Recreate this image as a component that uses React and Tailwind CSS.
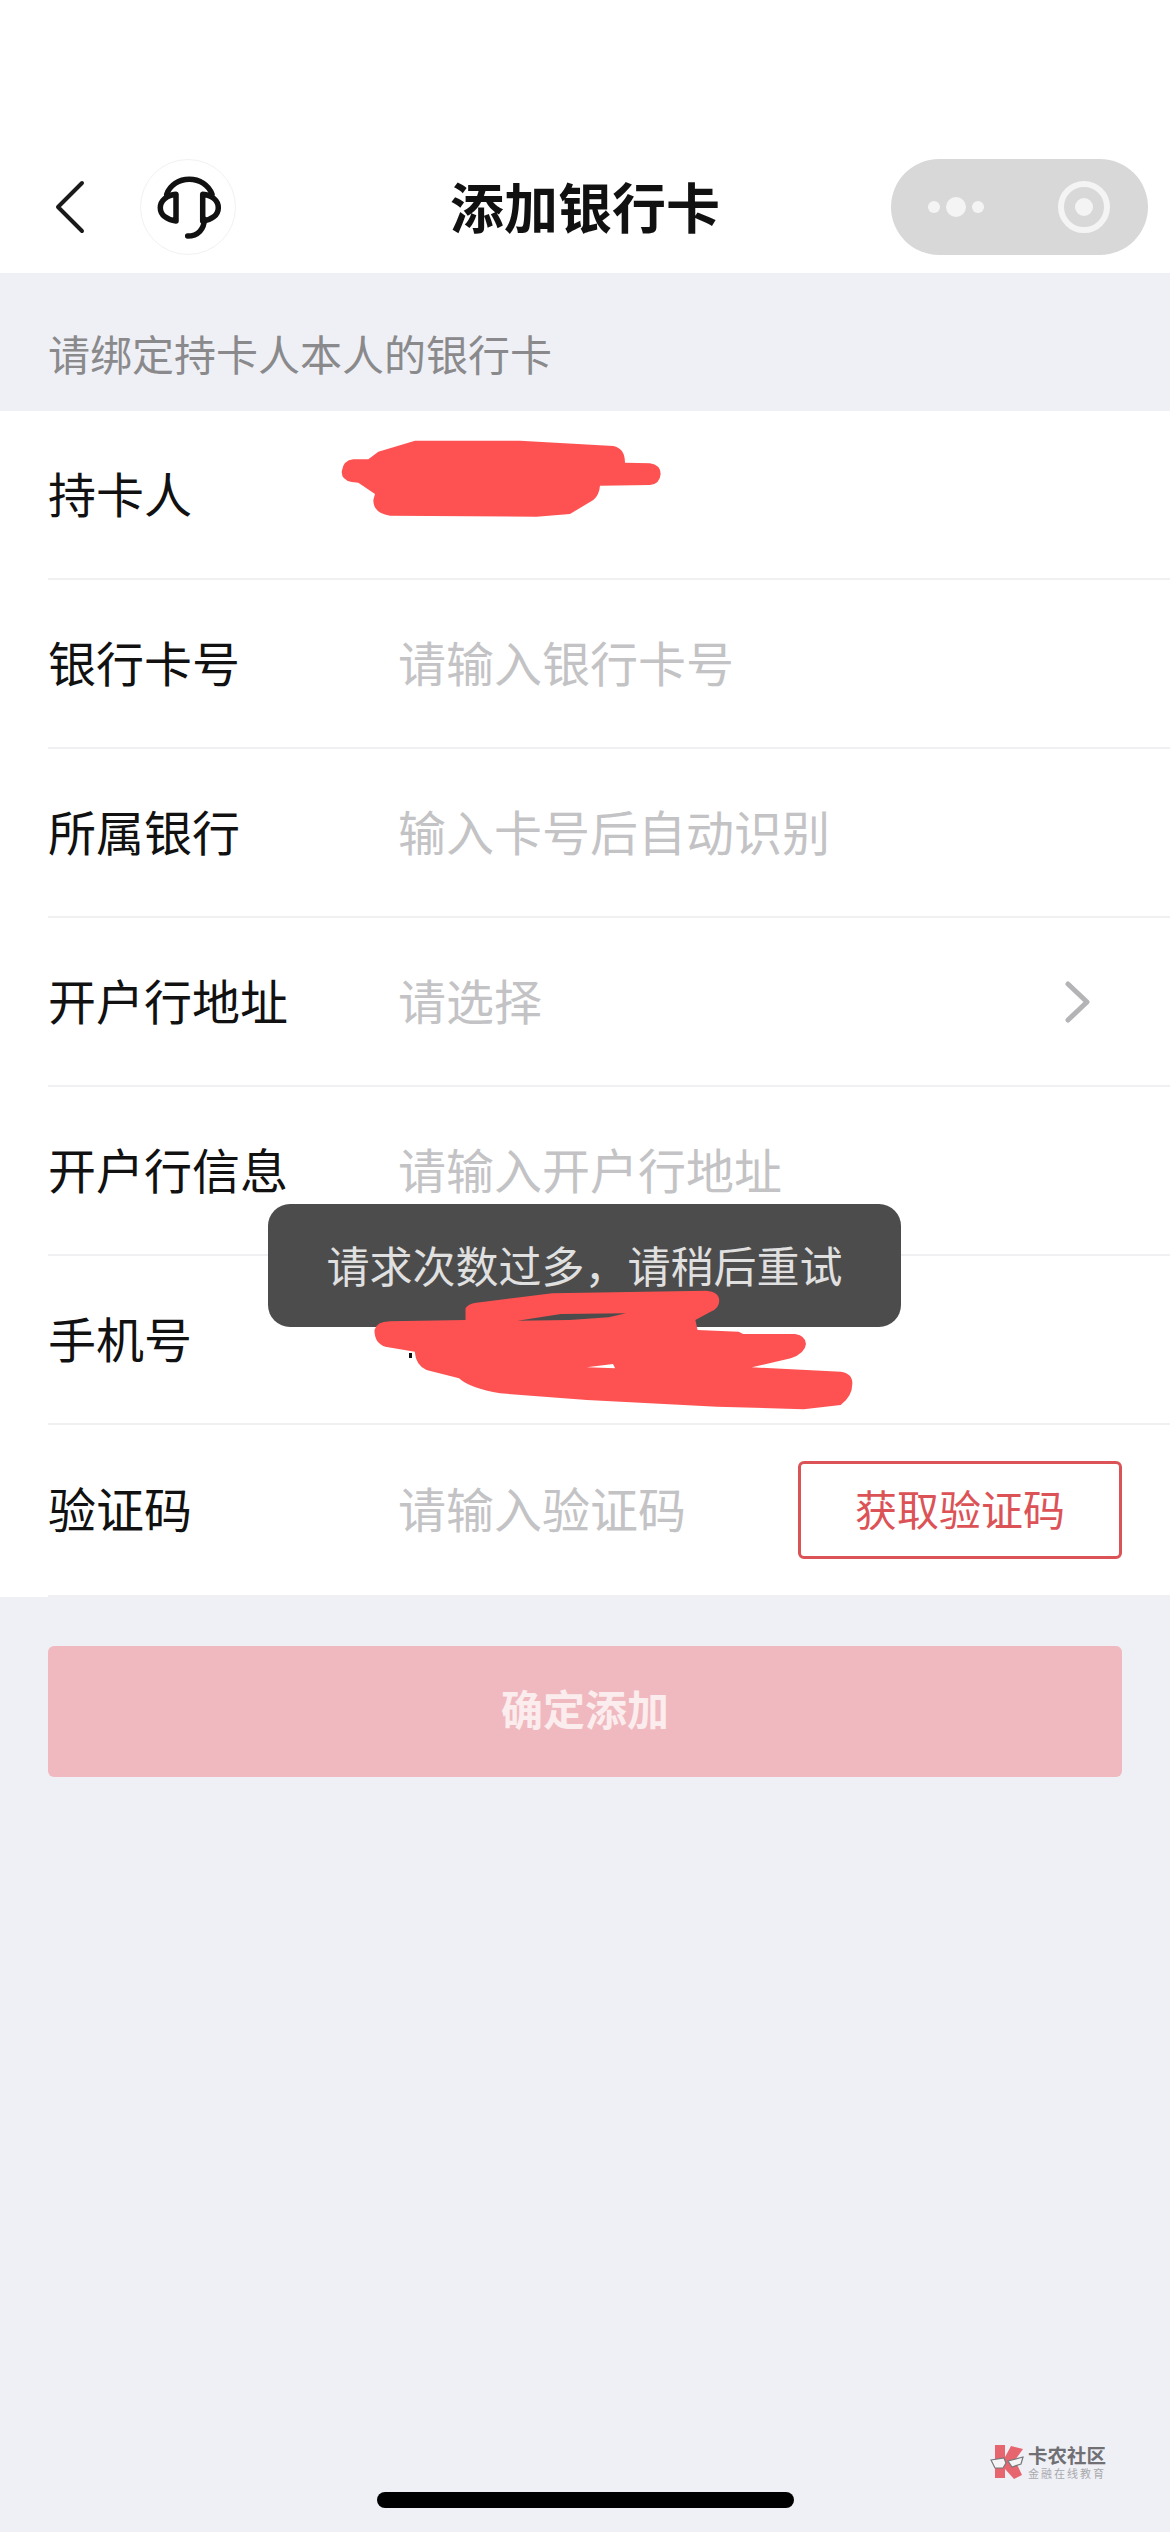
const font = { fontFamily: '"Noto Sans CJK SC", "Noto Sans", sans-serif' };

const Row = ({ label, placeholder, right, className = "h-[169px]" }) => (
  <div className={`ml-[48px] flex items-center border-b-2 border-[#f0f0f2] ${className}`}>
    <div className="w-[350px] shrink-0 pb-[6px] text-[48px] leading-none text-[#111111]">{label}</div>
    <div className="flex-1 pb-[6px] text-[48px] leading-none text-[#c3c3c5]">{placeholder}</div>
    {right}
  </div>
);

const Headset = () => (
  <svg width="96" height="96" viewBox="0 0 96 96" fill="none" stroke="#111111" strokeWidth="5.5" strokeLinecap="round" strokeLinejoin="round">
    <path d="M25.7 34.3C29 25 38 19.3 48.3 19.3C58.6 19.3 67.6 25 71 34.3" />
    <path d="M35 34.3V61C26 60 19.3 55 19.3 47.7C19.3 40.4 26 35 35 34.3Z" />
    <path d="M61.7 34.3V61C70.7 60 77.3 55 77.3 47.7C77.3 40.4 70.7 35 61.7 34.3Z" />
    <path d="M63.3 59.3C63.3 69 57 76 46.7 76" />
  </svg>
);

export default function App() {
  return (
    <div className="relative h-[2532px] w-[1170px] overflow-hidden bg-[#eff0f5]" style={font}>
      <header className="h-[273px] bg-white pt-[159px]">
        <div className="grid h-[96px] grid-cols-[1fr_auto_1fr] items-center">
          <div className="flex items-center pl-[54px]">
            <svg width="32" height="54" viewBox="0 0 32 54" fill="none" stroke="#1a1a1a" strokeWidth="4" strokeLinecap="round" strokeLinejoin="round">
              <path d="M28 3L4 27L28 51" />
            </svg>
            <div className="ml-[54px] h-[96px] w-[96px] rounded-full border border-[#f1f1f1]">
              <Headset />
            </div>
          </div>
          <h1 className="pb-[2px] text-[54px] font-bold leading-none text-[#111111]">添加银行卡</h1>
          <div className="flex justify-end pr-[22px]">
            <div className="flex h-[96px] w-[257px] items-center rounded-full bg-[#d8d8d8] pl-[37px]">
              <span className="h-[12px] w-[12px] rounded-full bg-[#f4f4f4]" />
              <span className="ml-[6px] h-[20px] w-[20px] rounded-full bg-[#f4f4f4]" />
              <span className="ml-[6px] h-[12px] w-[12px] rounded-full bg-[#f4f4f4]" />
              <span className="ml-[74px] flex h-[52px] w-[52px] items-center justify-center rounded-full border-[6px] border-[#f4f4f4]">
                <span className="h-[18px] w-[18px] rounded-full bg-[#f4f4f4]" />
              </span>
            </div>
          </div>
        </div>
      </header>

      <div className="flex h-[138px] items-center pl-[48px] pt-[22px] text-[42px] leading-none text-[#8a8a8c]">请绑定持卡人本人的银行卡</div>

      <section className="bg-white">
        <Row label="持卡人" />
        <Row label="银行卡号" placeholder="请输入银行卡号" />
        <Row label="所属银行" placeholder="输入卡号后自动识别" />
        <Row
          label="开户行地址"
          placeholder="请选择"
          right={
            <svg className="mr-[78px]" width="30" height="42" viewBox="0 0 30 42" fill="none" stroke="#b4b4b6" strokeWidth="5" strokeLinecap="round" strokeLinejoin="round">
              <path d="M6 3L25 21L6 39" />
            </svg>
          }
        />
        <Row label="开户行信息" placeholder="请输入开户行地址" />
        <Row label="手机号" />
        <Row
          label="验证码"
          placeholder="请输入验证码"
          className="h-[172px]"
          right={
            <button className="mr-[48px] flex h-[98px] w-[324px] items-center justify-center rounded-[6px] border-[3px] border-[#dc5357] pb-[4px] text-[42px] leading-none text-[#dc5357]">
              获取验证码
            </button>
          }
        />
      </section>

      <button className="mx-[48px] mt-[49px] flex h-[131px] w-[1074px] items-center justify-center rounded-[6px] bg-[#f0b9bf] pb-[8px] text-[42px] font-semibold leading-none text-[#fbeced]">
        确定添加
      </button>

      {/* toast */}
      <div className="absolute left-[268px] top-[1204px] flex h-[123px] w-[633px] items-center justify-center rounded-[22px] bg-[#4c4c4c] pb-[2px] text-[43px] leading-none text-[#e0e0e0]">
        请求次数过多，请稍后重试
      </div>

      {/* red marker over the private fields */}
      <svg className="absolute left-0 top-0" width="1170" height="2532" viewBox="0 0 1170 2532">
        <g transform="translate(320 420) scale(0.3333)" fill="#fe5252">
          <path d="M100 118L145 118L175 95L285 62L600 62L880 78Q915 85 915 128L990 130Q1022 135 1022 162Q1020 192 990 195L840 197Q838 225 820 240L750 282L650 290L210 287Q160 280 160 240L165 222L115 188L95 186Q65 180 65 155Q70 120 100 118Z" />
        </g>
        <g transform="translate(240 1180) scale(0.4337 0.3333)" fill="#fe5252" fillRule="evenodd">
          <path d="M310 450Q315 425 345 424L520 420L520 385Q525 372 545 368L720 340L1075 332Q1105 335 1105 362Q1105 385 1085 395L1050 420L1055 450L1150 455L1160 462L1280 462Q1305 468 1305 492Q1303 520 1270 535L1180 562L1385 575Q1412 580 1412 610Q1412 650 1385 675L1300 688L1100 680L800 660L600 640Q530 625 505 595L430 570Q405 555 403 515L335 500Q310 490 310 450ZM640 422L740 402L890 400L850 412L760 420ZM800 562L860 552L865 565Z" />
        </g>
        <rect x="409" y="1353" width="3" height="5" fill="#111111" />
      </svg>

      {/* watermark */}
      <div className="absolute left-[990px] top-[2445px] flex items-start">
        <svg width="34" height="35" viewBox="0 0 34 35">
          <path d="M5 0H15V12L21 1L33 4L25 15L32 30L24 34L15 24V33H5Z" fill="#e7656f" />
          <path d="M1 15L14 13L16 18L13 23L5 23ZM18 16L33 12L31 19L22 22Z" fill="#f4f4f6" stroke="#77777b" strokeWidth="1.2" />
        </svg>
        <div className="ml-[4px] flex flex-col">
          <span className="text-[19.5px] font-bold leading-[20px] text-[#6f6f74]">卡农社区</span>
          <span className="mt-[2px] whitespace-nowrap text-[11px] leading-[12px] tracking-[2px] text-[#a9a9ad]">金融在线教育</span>
        </div>
      </div>

      {/* home indicator */}
      <div className="absolute left-[377px] top-[2492px] h-[16px] w-[417px] rounded-[8px] bg-black" />
    </div>
  );
}
